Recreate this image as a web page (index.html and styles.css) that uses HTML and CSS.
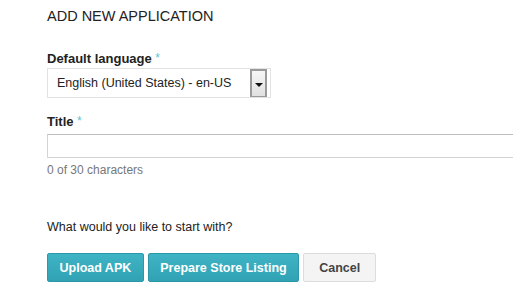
FILE: index.html
```html
<!DOCTYPE html>
<html>
	<head>
		<meta charset="UTF-8">
		<title>Add new application</title>
		<link rel="stylesheet" href="styles.css">
	</head>
	<body>
		<div class="dialog">
			<h2 class="title">ADD NEW APPLICATION</h2>

			<div class="field">
				<label class="label">Default language <span class="req">*</span></label>
				<div class="select">
					<span class="select-text">English (United States) - en-US</span>
					<span class="select-btn"><span class="arrow"></span></span>
				</div>
			</div>

			<div class="field">
				<label class="label">Title <span class="req">*</span></label>
				<div class="input"></div>
				<div class="hint">0 of 30 characters</div>
			</div>

			<p class="question">What would you like to start with?</p>

			<div class="actions">
				<button class="btn btn-primary">Upload APK</button>
				<button class="btn btn-primary">Prepare Store Listing</button>
				<button class="btn btn-default">Cancel</button>
			</div>
		</div>
	</body>
</html>
```

FILE: styles.css
```css
* {
	padding: 0;
	margin: 0;
	box-sizing: border-box;
}
body {
	background: #fff;
	font-family: "Liberation Sans", Arial, sans-serif;
	color: #222;
	overflow: hidden;
}
.dialog {
	padding: 8px 0 0 47px;
}
.title {
	font-size: 14.5px;
	font-weight: normal;
	line-height: 17px;
	color: #222;
}
.field {
	display: flex;
	flex-direction: column;
}
.label {
	font-size: 13px;
	font-weight: bold;
	line-height: 15px;
	margin-top: 26px;
	color: #222;
}
.req {
	color: #5fc1d1;
	font-weight: normal;
	font-size: 12px;
	vertical-align: top;
}
.select {
	display: flex;
	align-items: flex-end;
	justify-content: space-between;
	width: 224px;
	height: 30px;
	margin-top: 2px;
	border: 1px solid #e2e2e2;
	padding-right: 3px;
}
.select-text {
	align-self: center;
	font-size: 12.5px;
	padding-left: 9px;
	color: #222;
}
.select-btn {
	display: flex;
	align-items: center;
	justify-content: center;
	width: 17px;
	height: 28px;
	border: 2px solid #9a9a9a;
	border-bottom-width: 1px;
	background: linear-gradient(#f6f6f6, #e0e0e0);
}
.arrow {
	width: 0;
	height: 0;
	border-left: 4px solid transparent;
	border-right: 4px solid transparent;
	border-top: 4px solid #111;
	margin-top: 2px;
}
.field + .field .label {
	margin-top: 16px;
}
.input {
	width: 480px;
	height: 24px;
	margin-top: 5px;
	border: 1px solid #d4d4d4;
	border-top-color: #bdbdbd;
}
.hint {
	font-size: 12px;
	line-height: 14px;
	color: #777;
	margin-top: 5px;
}
.question {
	font-size: 12.5px;
	line-height: 15px;
	margin-top: 43px;
	color: #222;
}
.actions {
	display: flex;
	gap: 4px;
	margin-top: 18px;
}
.btn {
	height: 29px;
	font-family: "Liberation Sans", Arial, sans-serif;
	font-size: 12.5px;
	font-weight: bold;
	border-radius: 2px;
	padding: 0 11.5px;
}
.btn-primary {
	color: #fff;
	background: linear-gradient(#3fb4c5, #30a2b4);
	border: 1px solid #2b98a9;
}
.btn-default {
	color: #444;
	background: #f4f4f4;
	border: 1px solid #dcdcdc;
	padding: 0 15px;
}
```
